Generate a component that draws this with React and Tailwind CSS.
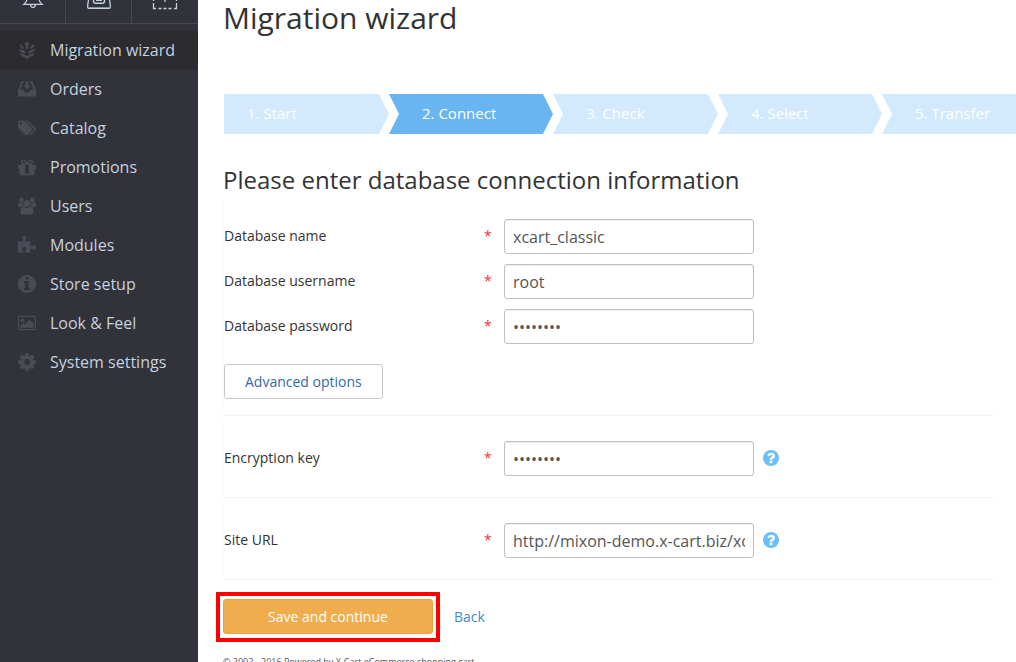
import React from "react";

const GLYPHS = {
  tags: ["0 0 1835 1792", "M384 448q0-53-37.5-90.5t-90.5-37.5-90.5 37.5-37.5 90.5 37.5 90.5 90.5 37.5 90.5-37.5 37.5-90.5zm1067 576q0 53-37 90l-491 492q-39 37-91 37-53 0-90-37l-715-716q-38-37-64.5-101t-26.5-117v-416q0-52 38-90t90-38h416q53 0 117 26.5t102 64.5l715 714q37 39 37 91zm384 0q0 53-37 90l-491 492q-39 37-91 37-36 0-59-14t-53-45l470-470q37-37 37-90 0-52-37-91l-715-714q-38-38-102-64.5t-117-26.5h224q53 0 117 26.5t102 64.5l715 714q37 39 37 91z"],
  gift: ["128 64 1536 1536", "M1056 1356v-716h-320v716q0 25 18 38.5t46 13.5h192q28 0 46-13.5t18-38.5zm-456-844h195l-126-161q-26-31-69-31-40 0-68 28t-28 68 28 68 68 28zm688-96q0-40-28-68t-68-28q-43 0-69 31l-125 161h194q40 0 68-28t28-68zm376 256v320q0 14-9 23t-23 9h-96v416q0 40-28 68t-68 28h-1088q-40 0-68-28t-28-68v-416h-96q-14 0-23-9t-9-23v-320q0-14 9-23t23-9h440q-93 0-158.5-65.5t-65.5-158.5 65.5-158.5 158.5-65.5q107 0 168 77l128 165 128-165q61-77 168-77 93 0 158.5 65.5t65.5 158.5-65.5 158.5-158.5 65.5h440q14 0 23 9t9 23z"],
  users: ["-64 0 1920 1792", "M529 896q-162 5-265 128h-134q-82 0-138-40.5t-56-118.5q0-353 124-353 6 0 43.5 21t97.5 42.5 119 21.5q67 0 133-23-5 37-5 66 0 139 81 256zm1071 637q0 120-73 189.5t-194 69.5h-874q-121 0-194-69.5t-73-189.5q0-53 3.5-103.5t14-109 26.5-108.5 43-97.5 62-81 85.5-53.5 111.5-20q10 0 43 21.5t73 48 107 48 135 21.5 135-21.5 107-48 73-48 43-21.5q61 0 111.5 20t85.5 53.5 62 81 43 97.5 26.5 108.5 14 109 3.5 103.5zm-1024-1277q0 106-75 181t-181 75-181-75-75-181 75-181 181-75 181 75 75 181zm704 384q0 159-112.5 271.5t-271.5 112.5-271.5-112.5-112.5-271.5 112.5-271.5 271.5-112.5 271.5 112.5 112.5 271.5zm576 225q0 78-56 118.5t-138 40.5h-134q-103-123-265-128 81-117 81-256 0-29-5-66 66 23 133 23 59 0 119-21.5t97.5-42.5 43.5-21q124 0 124 353zm-128-609q0 106-75 181t-181 75-181-75-75-181 75-181 181-75 181 75 75 181z"],
  puzzle: ["91 32 1664 1632", "M1755 1083q0 81-44.5 135t-123.5 54q-41 0-77.5-17.5t-59-38-56.5-38-71-17.5q-110 0-110 124 0 39 16 115t15 115v5q-22 0-33 1-34 3-97.5 11.5t-115.5 13.5-98 5q-61 0-103-26.5t-42-83.5q0-37 17.5-71t38-56.5 38-59 17.5-77.5q0-79-54-123.5t-135-44.5q-84 0-143 45.5t-59 127.5q0 43 15 83t33.5 64.5 33.5 53 15 50.5q0 45-46 89-37 35-117 35-95 0-245-24-9-2-27.5-4t-27.5-4l-13-2q-1 0-3-1-2 0-2-1v-1024q2 1 17.5 3.5t34 5 21.5 3.5q150 24 245 24 80 0 117-35 46-44 46-89 0-22-15-50.5t-33.5-53-33.5-64.5-15-83q0-82 59-127.5t144-45.5q80 0 134 44.5t54 123.5q0 41-17.5 77.5t-38 59-38 56.5-17.5 71q0 57 42 83.5t103 26.5q64 0 180-15t163-17v2q-1 2-3.5 17.5t-5 34-3.5 21.5q-24 150-24 245 0 80 35 117 44 46 89 46 22 0 50.5-15t53-33.5 64.5-33.5 83-15q82 0 127.5 59t45.5 143z"],
  info: ["128 128 1536 1536", "M1152 1376v-160q0-14-9-23t-23-9h-96v-512q0-14-9-23t-23-9h-320q-14 0-23 9t-9 23v160q0 14 9 23t23 9h96v320h-96q-14 0-23 9t-9 23v160q0 14 9 23t23 9h448q14 0 23-9t9-23zm-128-896v-160q0-14-9-23t-23-9h-192q-14 0-23 9t-9 23v160q0 14 9 23t23 9h192q14 0 23-9t9-23zm640 416q0 209-103 385.5t-279.5 279.5-385.5 103-385.5-103-279.5-279.5-103-385.5 103-385.5 279.5-279.5 385.5-103 385.5 103 279.5 279.5 103 385.5z"],
  image: ["-64 0 1920 1792", "M576 576q0 80-56 136t-136 56-136-56-56-136 56-136 136-56 136 56 56 136zm1024 384v448h-1408v-192l320-320 160 160 512-512zm96-704h-1600q-13 0-22.5 9.5t-9.5 22.5v1216q0 13 9.5 22.5t22.5 9.5h1600q13 0 22.5-9.5t9.5-22.5v-1216q0-13-9.5-22.5t-22.5-9.5zm160 32v1216q0 66-47 113t-113 47h-1600q-66 0-113-47t-47-113v-1216q0-66 47-113t113-47h1600q66 0 113 47t47 113z"],
  cog: ["128 128 1536 1536", "M1152 896q0-106-75-181t-181-75-181 75-75 181 75 181 181 75 181-75 75-181zm512-109v222q0 12-8 23t-20 13l-185 28q-19 54-39 91 35 50 107 138 10 12 10 25t-9 23q-27 37-99 108t-94 71q-12 0-26-9l-138-108q-44 23-91 38-16 136-29 186-7 28-36 28h-222q-14 0-24.5-8.5t-11.5-21.5l-28-184q-49-16-90-37l-141 107q-10 9-25 9-14 0-25-11-126-114-165-168-7-10-7-23 0-12 8-23 15-21 51-66.5t54-70.5q-27-50-41-99l-183-27q-13-2-21-12.5t-8-23.5v-222q0-12 8-23t19-13l186-28q14-46 39-92-40-57-107-138-10-12-10-24 0-10 9-23 26-36 98.5-107.5t94.5-71.5q13 0 26 10l138 107q44-23 91-38 16-136 29-186 7-28 36-28h222q14 0 24.5 8.5t11.5 21.5l28 184q49 16 90 37l142-107q9-9 24-9 13 0 25 10 129 119 165 170 7 8 7 22 0 12-8 23-15 21-51 66.5t-54 70.5q26 50 41 98l183 28q13 2 21 12.5t8 23.5z"],
  orders: ["0 0 18 18", "M3.6 1h2.9v1.6H5L2.5 10h3.3l1.1 2.6h4.2L12.2 10h3.3L13 2.6h-1.500V1h2.900L18 10.200V16.500H0V10.200zM7.900 1h2.200v4.300h2.700L9 9.300 5.200 5.300h2.700z"],
  migration: ["0 0 18 18", "M9 0.200l3.200 3.600h-1.900v3.600L9 8.500 7.700 7.400V3.800H5.800zM1.600 3.400q3.900.2 4.400 4.300-3.900-.2-4.400-4.300zM16.400 3.400q-3.900.2-4.400 4.300 3.900-.2 4.400-4.300zM.6 8.300Q6 7.600 8.400 12.200 3.200 13 .6 8.300zM17.400 8.300Q12 7.600 9.600 12.200 14.800 13 17.400 8.300zM1.800 12.700q4.200-.5 5.900 1.600L9 15l1.300-.7q1.700-2.100 5.900-1.600-1.200 3-3.800 3.300-1.200.1-1.700.9L9 18 7.300 16.900q-.5-.8-1.700-.9-2.600-.3-3.800-3.300z"],
  help: ["128 128 1536 1536", "M1024 1376v-192q0-14-9-23t-23-9h-192q-14 0-23 9t-9 23v192q0 14 9 23t23 9h192q14 0 23-9t9-23zm256-672q0-88-55.5-163t-138.5-116-170-41q-243 0-371 213-15 24 8 42l132 100q7 6 19 6 16 0 25-12 53-68 86-92 34-24 86-24 48 0 85.500 26t37.500 59q0 38-20 61t-68 45q-63 28-115.500 86.500t-52.500 125.500v36q0 14 9 23t23 9h192q14 0 23-9t9-23q0-19 21.500-49.500t54.500-49.500q32-18 49-28.500t46-35 44.500-48 28-60.500 12.500-81zm384 192q0 209-103 385.500t-279.500 279.500-385.500 103-385.500-103-279.500-279.500-103-385.500 103-385.500 279.500-279.500 385.500-103 385.500 103 279.500 279.500 103 385.500z"],
};

function Glyph({ name, className }) {
  const [viewBox, d] = GLYPHS[name];
  return (
    <svg viewBox={viewBox} className={className} fill="currentColor" aria-hidden="true">
      <path d={d} />
    </svg>
  );
}

const MENU = [
  ["migration", "Migration wizard"],
  ["orders", "Orders"],
  ["tags", "Catalog"],
  ["gift", "Promotions"],
  ["users", "Users"],
  ["puzzle", "Modules"],
  ["info", "Store setup"],
  ["image", "Look & Feel"],
  ["cog", "System settings"],
];

const STEPS = ["1. Start", "2. Connect", "3. Check", "4. Select", "5. Transfer"];

function Sidebar() {
  return (
    <aside className="w-[198px] shrink-0 bg-[#32323a] text-[#c4d1df]">
      <div className="grid h-6 grid-cols-3 border-b border-[#46474f]">
        <button type="button" aria-label="Notifications" className="flex justify-center border-r border-[#46474f]">
          <svg width="24" height="10" viewBox="0 0 24 10" fill="none" stroke="currentColor">
            <path d="M5.800 0Q5.500 2.200 2.800 4.400H21.200Q18.500 2.200 18.200 0" strokeWidth="1.300" />
            <path d="M9.600 5Q9.800 7.300 12 7.300T14.400 5" strokeWidth="1.300" />
          </svg>
        </button>
        <button type="button" aria-label="Orders" className="flex justify-center border-r border-[#46474f]">
          <svg width="26" height="10" viewBox="0 0 26 10" fill="none" stroke="currentColor">
            <path d="M2.500 0L1.700 5V7.200Q1.700 8.300 2.800 8.300H23.200Q24.300 8.300 24.300 7.200V5L23.500 0" strokeWidth="1.300" />
            <path d="M7.500 0V1Q7.500 3.300 9.800 3.300H16.200Q18.500 3.300 18.500 1V0" strokeWidth="1.400" />
            <path d="M10 0.500H16" />
            <path d="M2.500 7.500H23.500" stroke="#8b939e" />
          </svg>
        </button>
        <button type="button" aria-label="Add" className="flex justify-center">
          <svg width="26" height="10" viewBox="0 0 26 10" fill="none" stroke="currentColor">
            <path d="M1.500 3V8.500H4M24.500 3V8.500H22M6.500 8.500H9.500M11.500 8.500H14.500M16.500 8.500H19.500M1.500 0V1M24.500 0V1M13 0V2" strokeWidth="1.300" />
          </svg>
        </button>
      </div>
      <nav className="pt-[7px]">
        {MENU.map(([icon, label], i) => (
          <a
            key={label}
            href="#"
            className={`flex h-[39px] items-center gap-[14px] pb-0.5 pl-[18px] text-[16px] leading-6 ${i === 0 ? "bg-[#2b2b30]" : ""}`}
          >
            <Glyph name={icon} className="size-[18px] shrink-0 text-[#4a4b55]" />
            {label}
          </a>
        ))}
      </nav>
    </aside>
  );
}

function Steps() {
  return (
    <ol className="-mr-[21px] mt-[58px] ml-px flex h-10 overflow-hidden text-[15px] leading-[38px] text-white">
      {STEPS.map((s, i) => (
        <li
          key={s}
          className={
            i === 0
              ? "w-[165px] shrink-0 bg-[#d3eafe] pl-[23px] [clip-path:polygon(0_0,calc(100%-10px)_0,100%_50%,calc(100%-10px)_100%,0_100%)]"
              : `${i % 2 === 0 ? "w-[165px]" : "w-[164px]"} shrink-0 pl-[33px] [clip-path:polygon(0_0,calc(100%-10px)_0,100%_50%,calc(100%-10px)_100%,0_100%,10px_50%)] ${i === 1 ? "bg-[#68b5f1]" : "bg-[#d3eafe]"}`
          }
        >
          {s}
        </li>
      ))}
    </ol>
  );
}

function Field({ id, label, type = "text", value, help }) {
  return (
    <div className="flex h-[35px]">
      <label htmlFor={id} className="w-[260px] shrink-0 pt-[7px] text-[14px] leading-5">
        {label}
      </label>
      <span className="w-5 shrink-0 pt-[7px] text-[14px] leading-5 text-[#ff2d3c]">*</span>
      <input
        id={id}
        type={type}
        defaultValue={value}
        className="h-[35px] w-[250px] rounded-[3px] border border-[#c0c0c0] bg-white px-2 text-[16px] text-[#555555] shadow-[inset_0_1px_1px_rgba(0,0,0,0.075)] outline-none"
      />
      {help && (
        <button type="button" aria-label={`Help: ${label}`} className="ml-[9px] pb-0.5 text-[#6bbffa]">
          <Glyph name="help" className="size-4" />
        </button>
      )}
    </div>
  );
}

export default function App() {
  return (
    <div className="flex h-screen overflow-hidden bg-white font-['Open_Sans',sans-serif] text-[#333333]">
      <Sidebar />
      <main className="min-w-0 flex-1 overflow-hidden pr-[21px] pl-[25px]">
        <h1 className="text-[30px] leading-9">Migration wizard</h1>
        <Steps />
        <form onSubmit={(e) => e.preventDefault()}>
          <h2 className="mt-7 text-[24px] leading-9">Please enter database connection information</h2>
          <section className="flex flex-col gap-[10px] rounded-[3px] border-b border-l border-b-[#f3f3f3] border-l-[#fbfbfb] pt-[21px] pb-4">
            <Field id="db-name" label="Database name" value="xcart_classic" />
            <Field id="db-user" label="Database username" value="root" />
            <Field id="db-pass" label="Database password" type="password" value="password" />
            <button
              type="button"
              className="mt-[10px] h-[35px] self-start rounded-[3px] border border-[#c8c8c8] bg-white px-5 text-[14px] text-[#3569a6]"
            >
              Advanced options
            </button>
          </section>
          <section className="rounded-[3px] border-b border-l border-b-[#f3f3f3] border-l-[#fbfbfb] pt-[25px] pb-[21px]">
            <Field id="enc-key" label="Encryption key" type="password" value="password" help />
          </section>
          <section className="rounded-[3px] border-b border-l border-b-[#f3f3f3] border-l-[#fbfbfb] pt-[25px] pb-[21px]">
            <Field id="site-url" label="Site URL" value="http://mixon-demo.x-cart.biz/xcart_classic" help />
          </section>
          <div className="mt-[19px] flex items-center gap-[21px] text-[14px]">
            <div className="relative">
              <button
                type="submit"
                className="h-[35px] w-[210px] rounded-[3px] border border-[#eea236] bg-[#f0ad4e] text-white"
              >
                Save and continue
              </button>
              <span className="pointer-events-none absolute -inset-x-[7px] -top-[7px] -bottom-2 border-4 border-[#ff0000]" />
            </div>
            <a href="#" className="text-[#428bca]">Back</a>
          </div>
        </form>
        <footer className="mt-5 text-[9px] leading-4 whitespace-nowrap text-[#555555]">
          © 2002 - 2016 Powered by X-Cart eCommerce shopping cart
        </footer>
      </main>
    </div>
  );
}
